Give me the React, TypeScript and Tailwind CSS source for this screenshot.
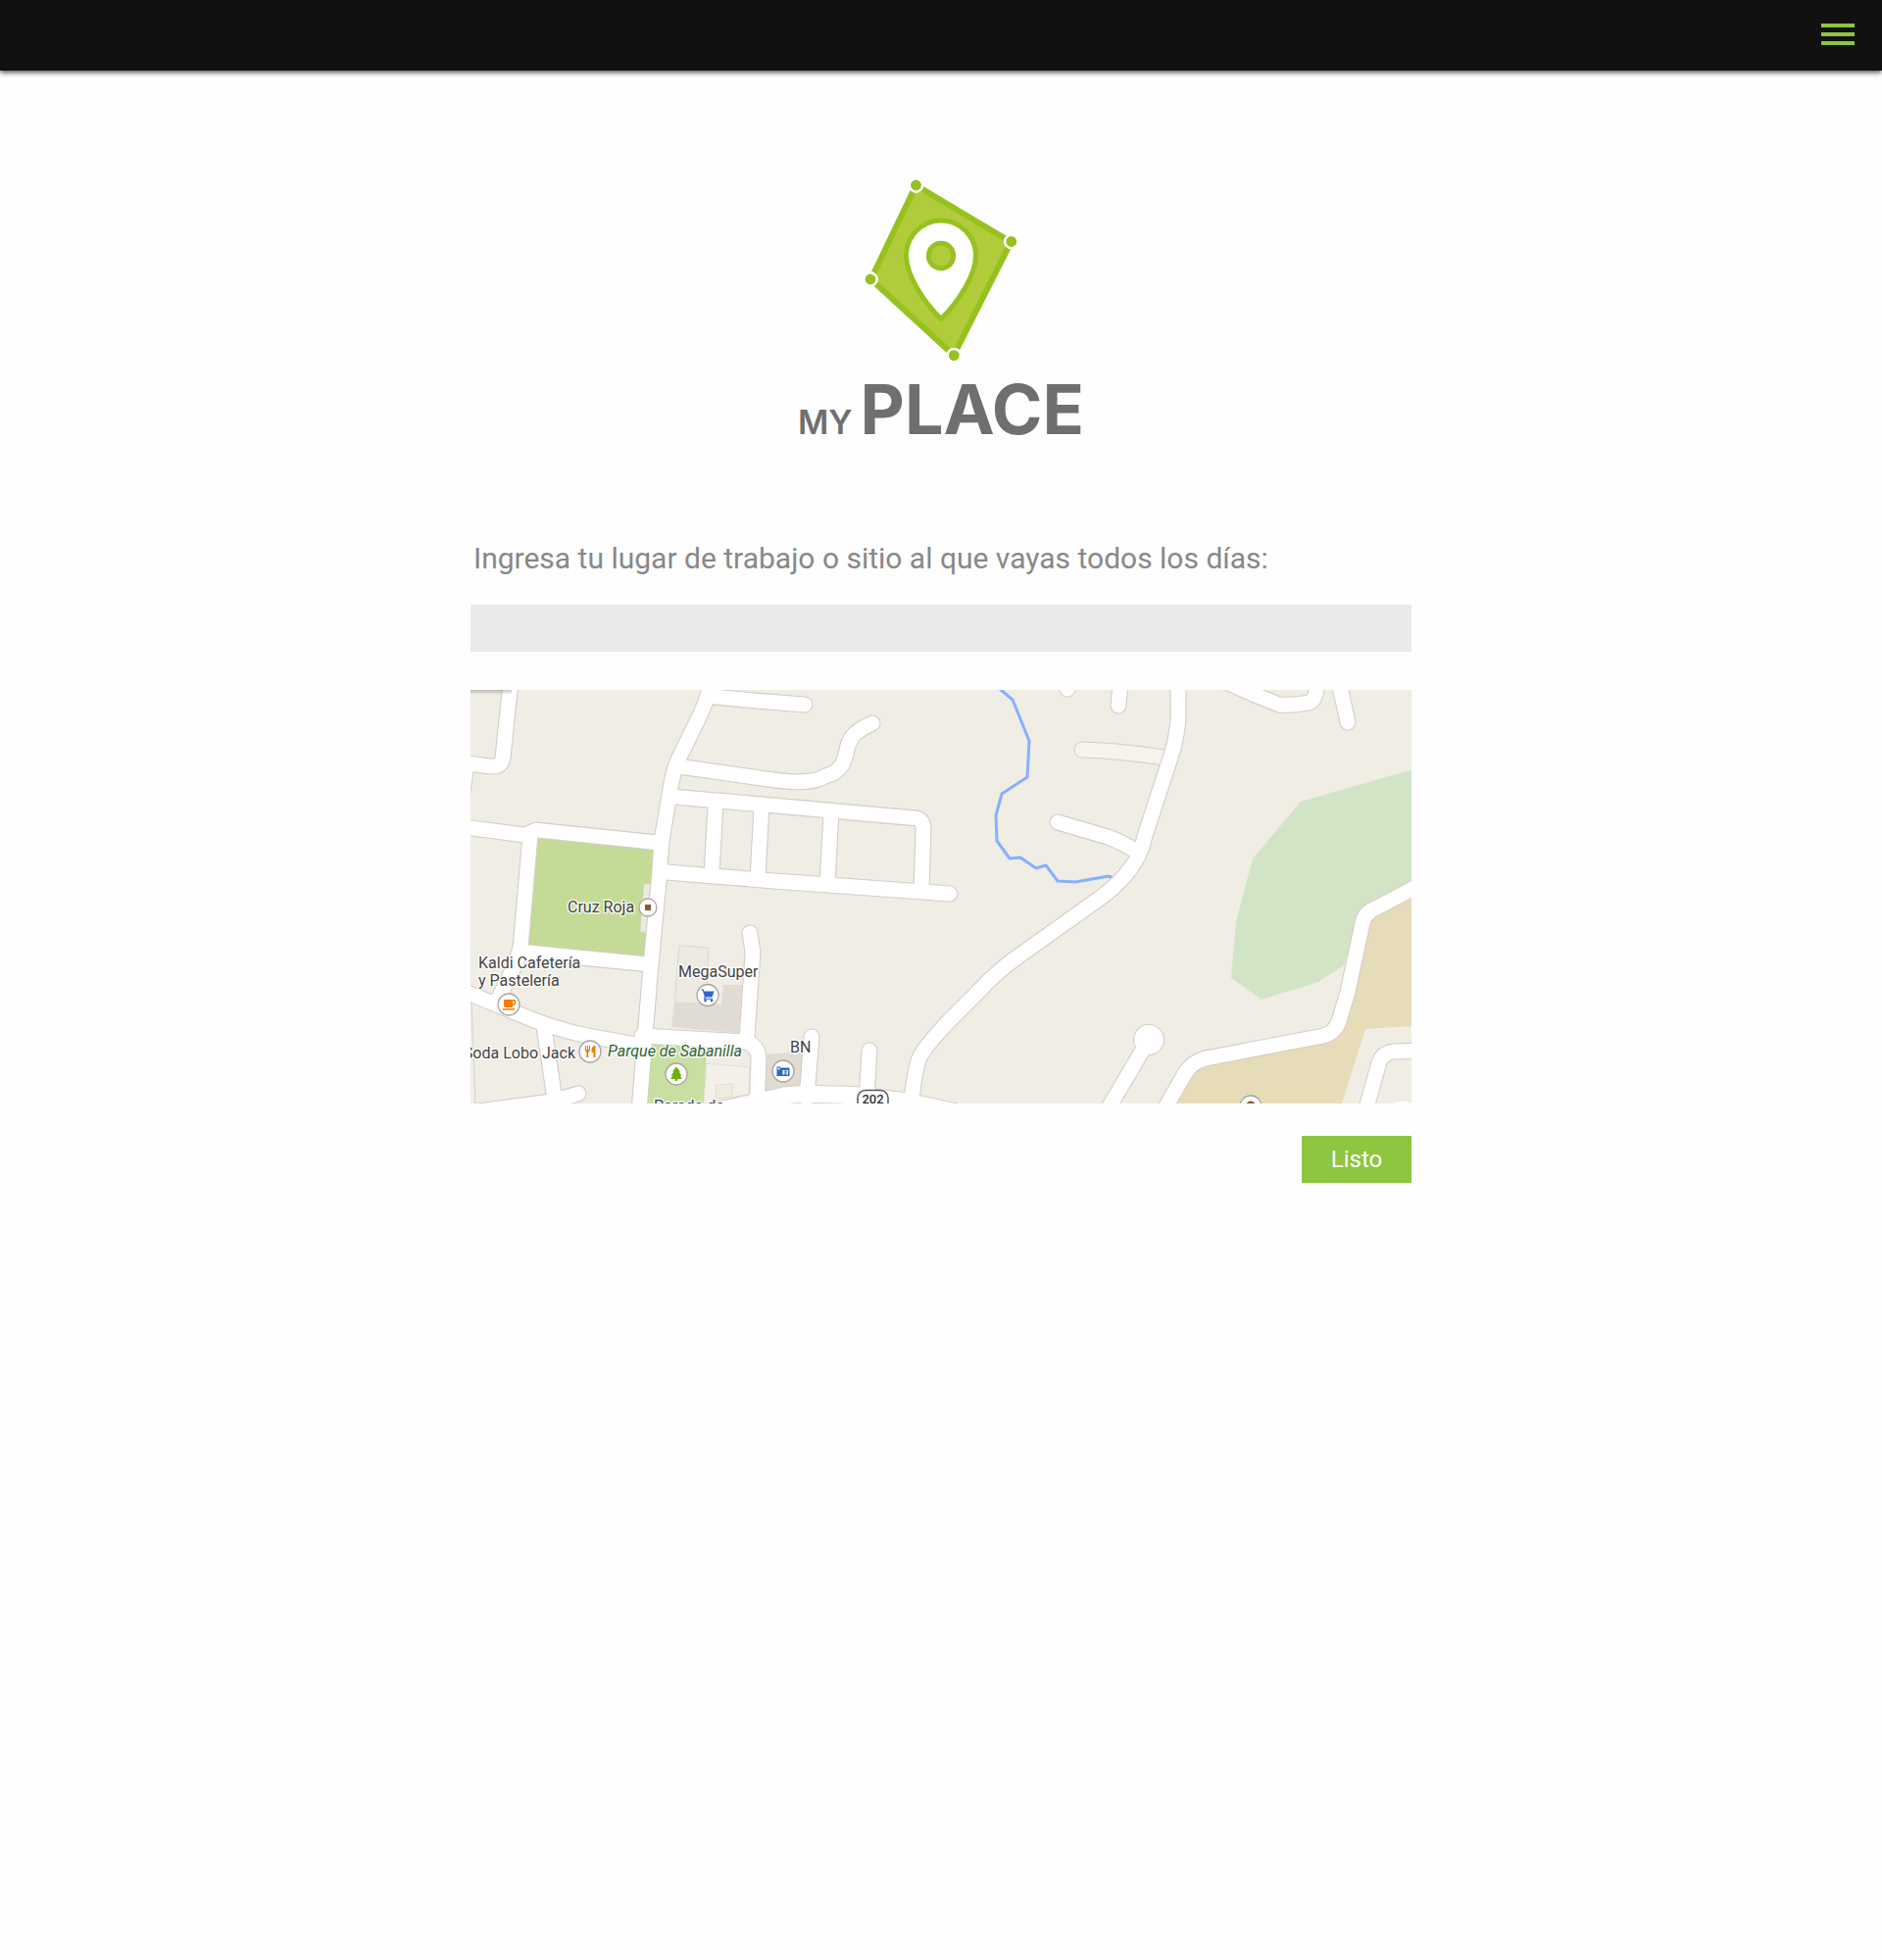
import React from "react";

const LABEL_FONT = "Roboto, sans-serif";

const minorRoads = ["M1104 765 Q1140 766 1188 773"];

const roads = [
  // north-west
  "M521 696 L513 773 Q512 783 500 782 L478 779",
  "M476 780 L471 815",
  "M474 844 L535 852 L547 847 L672 860",
  "M541 852 L531 967 L525 986 L508 1020",
  "M531 971 L662 984",
  // main north-south street
  "M726 696 Q719 721 712 734 L692 775 Q687 786 684 804 L675 858 L672 900 L664 985 L658 1058 L652 1134",
  "M728 711 L770 715 L821 719",
  "M692 782 L790 796 Q828 801 842 792 C870 784 858 762 872 749 Q880 742 890 738",
  "M686 813 L790 822 L935 835 Q942 837 942 846 L940 908",
  "M680 890 L790 899 L969 912",
  "M730 820 L726 892",
  "M777 822 L773 896",
  "M848 828 L844 902",
  // south-west
  "M470 1010 L530 1035 Q565 1050 600 1057 L655 1067",
  "M655 1057 L760 1063 Q774 1066 774 1082 L772 1130",
  "M765 952 L768 972 L762 1060",
  "M555 1048 L566 1122",
  "M480 1135 L562 1124 L590 1116",
  "M828 1058 L823 1120",
  "M887 1072 L884 1120",
  // valley road
  "M1202 696 L1202 735 Q1200 752 1197 764 L1168 853 Q1164 875 1148 893 Q1138 905 1120 918 L1040 975 Q1018 990 997 1013 L966 1044 Q940 1072 937 1082 Q933 1095 930 1122",
  "M1079 839 L1130 854 Q1148 861 1158 868",
  "M1089 696 L1089 703",
  "M1143 696 L1141 720",
  "M1240 691 L1280 709 L1305 719 Q1320 720 1335 717 Q1344 714 1343 696",
  "M1366 696 L1375 737",
  // south-east
  "M1448 903 L1405 926 Q1392 931 1390 942 L1375 1012 L1367 1039 Q1363 1054 1350 1057 L1235 1079 Q1217 1082 1209 1095 L1188 1132",
  "M1450 1072 L1422 1073 Q1411 1074 1407 1084 L1393 1134",
  "M1172 1061 L1130 1132",
];

function Marker({ x, y, r = 11, children }: { x: number; y: number; r?: number; children?: React.ReactNode }) {
  return (
    <g transform={`translate(${x} ${y})`}>
      <circle r={r} fill="#fff" stroke="#aaa6a0" strokeWidth="1.3" />
      {children}
    </g>
  );
}

function Place({ x, y, fill = "#444", italic = false, anchor = "start", children }: {
  x: number;
  y: number;
  fill?: string;
  italic?: boolean;
  anchor?: "start" | "middle" | "end";
  children: string;
}) {
  return (
    <text
      x={x}
      y={y}
      fontSize={16}
      fontFamily={LABEL_FONT}
      fontStyle={italic ? "italic" : "normal"}
      textAnchor={anchor}
      fill={fill}
      stroke="#fff"
      strokeOpacity="0.8"
      strokeWidth="3"
      strokeLinejoin="round"
      paintOrder="stroke"
    >
      {children}
    </text>
  );
}

function StreetMap() {
  return (
    <svg viewBox="480 704 960 422" className="block w-full" role="img" aria-label="Mapa de Sabanilla">
      <defs>
        <linearGradient id="edgeShade" x1="0" y1="0" x2="0" y2="1">
          <stop offset="0" stopColor="#000" stopOpacity="0.22" />
          <stop offset="1" stopColor="#000" stopOpacity="0" />
        </linearGradient>
      </defs>
      <rect x="480" y="704" width="960" height="422" fill="#f0ede5" />

      {/* parks and land use */}
      <path d="M1440 786 L1417 792 L1327 818 L1278 876 L1261 940 L1256 998 L1287 1020 L1345 1002 L1371 985 L1392 925 L1440 902Z" fill="#d2e4c6" />
      <path d="M1440 912 L1397 940 L1375 1030 L1350 1060 L1225 1082 L1195 1126 L1369 1126 L1393 1050 L1440 1047Z" fill="#e6ddb8" />
      <path d="M549 855 L668 867 L659 977 L539 966Z" fill="#c3db96" />
      <path d="M657 902 L666 902 L662 951 L653 951Z" fill="#ece9df" stroke="#d8d4c8" strokeWidth="0.7" />
      <path d="M660 1064 L721 1069 L718 1126 L655 1126Z" fill="#c8dfa2" />
      <path d="M721 1085 L765 1089 L764 1116 L731 1124 L718 1126Z" fill="#f3f0e9" stroke="#e2ded4" strokeWidth="1" />
      <path d="M731 1107 L748 1106 L747 1119 L730 1121Z" fill="#eeebe2" stroke="#e2ded4" strokeWidth="1" />
      <path d="M693 965 L723 967 L720 1024 L688 1023Z" fill="#edeae3" stroke="#dcd8d0" strokeWidth="1" />
      <path d="M688 1023 L736 1025 L738 1005 L757 1005 L754 1054 L685 1048Z" fill="#e0dbd3" />
      <path d="M780 1076 L818 1073 L818 1110 L780 1116Z" fill="#e0dbd3" />
      <path d="M481 1022 L485 1126" stroke="#d6d1c6" strokeWidth="1" fill="none" />

      {/* creek */}
      <path
        d="M1020 703 L1033 714 L1050 756 L1048 793 L1022 810 L1016 832 L1017 858 L1030 876 L1041 875 L1057 886 L1067 883 L1079 899 L1097 900 L1131 894 L1138 897"
        fill="none" stroke="#86b0fd" strokeWidth="3" strokeLinejoin="round"
      />

      {/* street casings, then surfaces */}
      <g fill="none" strokeLinecap="round" strokeLinejoin="round">
        <g stroke="#d4cec4" strokeWidth="17">
          {minorRoads.map((d) => <path key={d} d={d} />)}
        </g>
        <g stroke="#f6f3ef" strokeWidth="15">
          {minorRoads.map((d) => <path key={d} d={d} />)}
        </g>
        <g stroke="#d4cec4" strokeWidth="17">
          {roads.map((d) => <path key={d} d={d} />)}
          <circle cx="1172" cy="1061" r="7.5" />
          <path d="M715 1137 L775 1124 L800 1118 Q820 1115 875 1118 L925 1124 L985 1137" strokeWidth="19" />
        </g>
        <g stroke="#fff" strokeWidth="14.8">
          {roads.map((d) => <path key={d} d={d} />)}
          <circle cx="1172" cy="1061" r="7.5" fill="#fff" />
          <path d="M715 1137 L775 1124 L800 1118 Q820 1115 875 1118 L925 1124 L985 1137" strokeWidth="17" />
        </g>
      </g>
      <path d="M1422 1126 Q1432 1121 1440 1126Z" fill="#fff" />
      <rect x="480" y="704" width="42" height="5" fill="url(#edgeShade)" />

      {/* points of interest */}
      <Place x={579} y={931}>Cruz Roja</Place>
      <Marker x={661} y={926} r={9}>
        <rect x="-3" y="-3" width="6" height="6" fill="#8a5a38" />
      </Marker>

      <Place x={488} y={988}>Kaldi Cafetería</Place>
      <Place x={488} y={1006}>y Pastelería</Place>
      <Marker x={519} y={1025}>
        <path d="M-5 -5 H6 Q7 -5 7 -4 V-1 Q7 1 4 1 V3 H-3 Q-5 3 -5 1Z M4 -3.5 V-0.5 H5.5 V-3.5Z" fill="#f57c00" fillRule="evenodd" />
        <rect x="-6" y="4" width="12" height="1.6" fill="#f57c00" />
      </Marker>

      <Place x={587} y={1080} anchor="end">Soda Lobo Jack</Place>
      <Marker x={602} y={1073}>
        <path d="M-5 -6 V-2 Q-5 0 -3.6 0.5 V6 H-1.8 V0.5 Q0 0 0 -2 V-6 H-1 V-2 H-2 V-6 H-3 V-2 H-4 V-6Z M5.5 -6 Q1.5 -6 1.5 -1 V1 H3.5 V6 H5.5Z" fill="#f57c00" />
      </Marker>

      <Place x={620} y={1078} italic fill="#2f6337">Parque de Sabanilla</Place>
      <Marker x={690} y={1096}>
        <path d="M0 -7.5 L4 -2.5 H2.5 L5.5 1.5 H3.5 L6 5 H1.2 V7 H-1.2 V5 H-6 L-3.5 1.5 H-5.5 L-2.5 -2.5 H-4Z" fill="#6cb000" />
      </Marker>

      <Place x={692} y={997}>MegaSuper</Place>
      <Marker x={722} y={1015.5}>
        <path d="M-7 -6 H-4.3 L-3.6 -4 H6.5 L4.5 2 H-2 L-2.5 3.2 H5 V4.2 H-4.2 L-3.2 1.5 L-5.2 -5 H-7Z" fill="#2f66cc" />
        <circle cx="-2.5" cy="5.6" r="1.3" fill="#2f66cc" />
        <circle cx="4" cy="5.6" r="1.3" fill="#2f66cc" />
      </Marker>

      <Place x={806} y={1074}>BN</Place>
      <Marker x={799} y={1093}>
        <path d="M-6.5 -4.5 H-3 V-3.5 H6.5 V5 H-6.5Z" fill="#2f66cc" />
        <path d="M-5.5 -3.5 H-3.5 V-1.5 H-5.5Z M-1 -1 H1.5 V3.5 H-1 V2.5 H0 V1.7 H-1 V0.7 H0 V0 H-1Z M2.5 -1 H5 V3.5 H2.5 V2.5 H4 V1.7 H2.5 V0.7 H4 V0 H2.5Z" fill="#e6eefc" />
      </Marker>

      <Marker x={1276} y={1129}>
        <circle cy="-1" r="4.5" fill="#8a5a38" />
      </Marker>

      <rect x="875" y="1112.5" width="31" height="20" rx="8" fill="#fff" stroke="#555" strokeWidth="1.5" />
      <text x="890.5" y="1126" fontSize="13" fontFamily={LABEL_FONT} fontWeight="500" textAnchor="middle" fill="#333">202</text>
      <Place x={667} y={1134} fill="#2c4a66">Parada de</Place>
    </svg>
  );
}

function Logo() {
  return (
    <h1 className="flex flex-col items-center text-[#6f6f6f]">
      <svg viewBox="880 180 160 192" className="block h-48 w-40" aria-hidden="true">
        <path d="M934.500 189 L1031.500 247 L973 362.500 L888.500 285Z" fill="#b0cc3a" stroke="#97c11f" strokeWidth="6" />
        <path
          d="M960 325.500 C943 309 924.500 281 924.500 261 A35.500 36 0 0 1 995.500 261 C995.500 281 977 309 960 325.500Z"
          fill="#fff" stroke="#97c11f" strokeWidth="5"
        />
        <circle cx="960" cy="261" r="12.800" fill="#b0cc3a" stroke="#97c11f" strokeWidth="4.800" />
        <g fill="#97c11f" stroke="#fff" strokeWidth="2.500">
          <circle cx="934.500" cy="189" r="6.700" />
          <circle cx="1031.800" cy="246.500" r="6.700" />
          <circle cx="888" cy="285" r="6.700" />
          <circle cx="973.200" cy="362.600" r="6.700" />
        </g>
      </svg>
      <span className="flex items-baseline gap-2 font-[Inter,sans-serif] leading-[92px]">
        <span className="text-[34px] font-semibold">MY</span>
        <span className="text-[70px] font-bold">PLACE</span>
      </span>
    </h1>
  );
}

export default function App() {
  return (
    <div className="min-h-screen bg-[#fefefe] font-[Roboto,sans-serif]">
      <header className="flex h-18 items-center justify-end bg-[#111] px-7 pb-0.5 shadow-[0_2px_5px_rgba(0,0,0,0.7)]">
        <button type="button" aria-label="Abrir menú" className="flex w-[34px] flex-col gap-[5px]">
          <span className="h-1 w-full bg-[#8dc63f]" />
          <span className="h-1 w-full bg-[#8dc63f]" />
          <span className="h-1 w-full bg-[#8dc63f]" />
        </button>
      </header>

      <main className="mx-auto flex w-1/2 flex-col pt-27">
        <Logo />
        <form className="mt-[73px] flex flex-col" onSubmit={(e) => e.preventDefault()}>
          <label htmlFor="place" className="pl-[3px] text-[30px] leading-10 text-[#888]">
            Ingresa tu lugar de trabajo o sitio al que vayas todos los días:
          </label>
          <input id="place" type="text" className="mt-[27px] h-12 w-full bg-[#eaeaea] px-3 text-2xl text-[#555] outline-none" />
          <div className="mt-[39px]">
            <StreetMap />
          </div>
          <button type="submit" className="mt-[33px] h-12 w-28 self-end bg-[#8dc63f] text-2xl text-white">
            Listo
          </button>
        </form>
      </main>
    </div>
  );
}
